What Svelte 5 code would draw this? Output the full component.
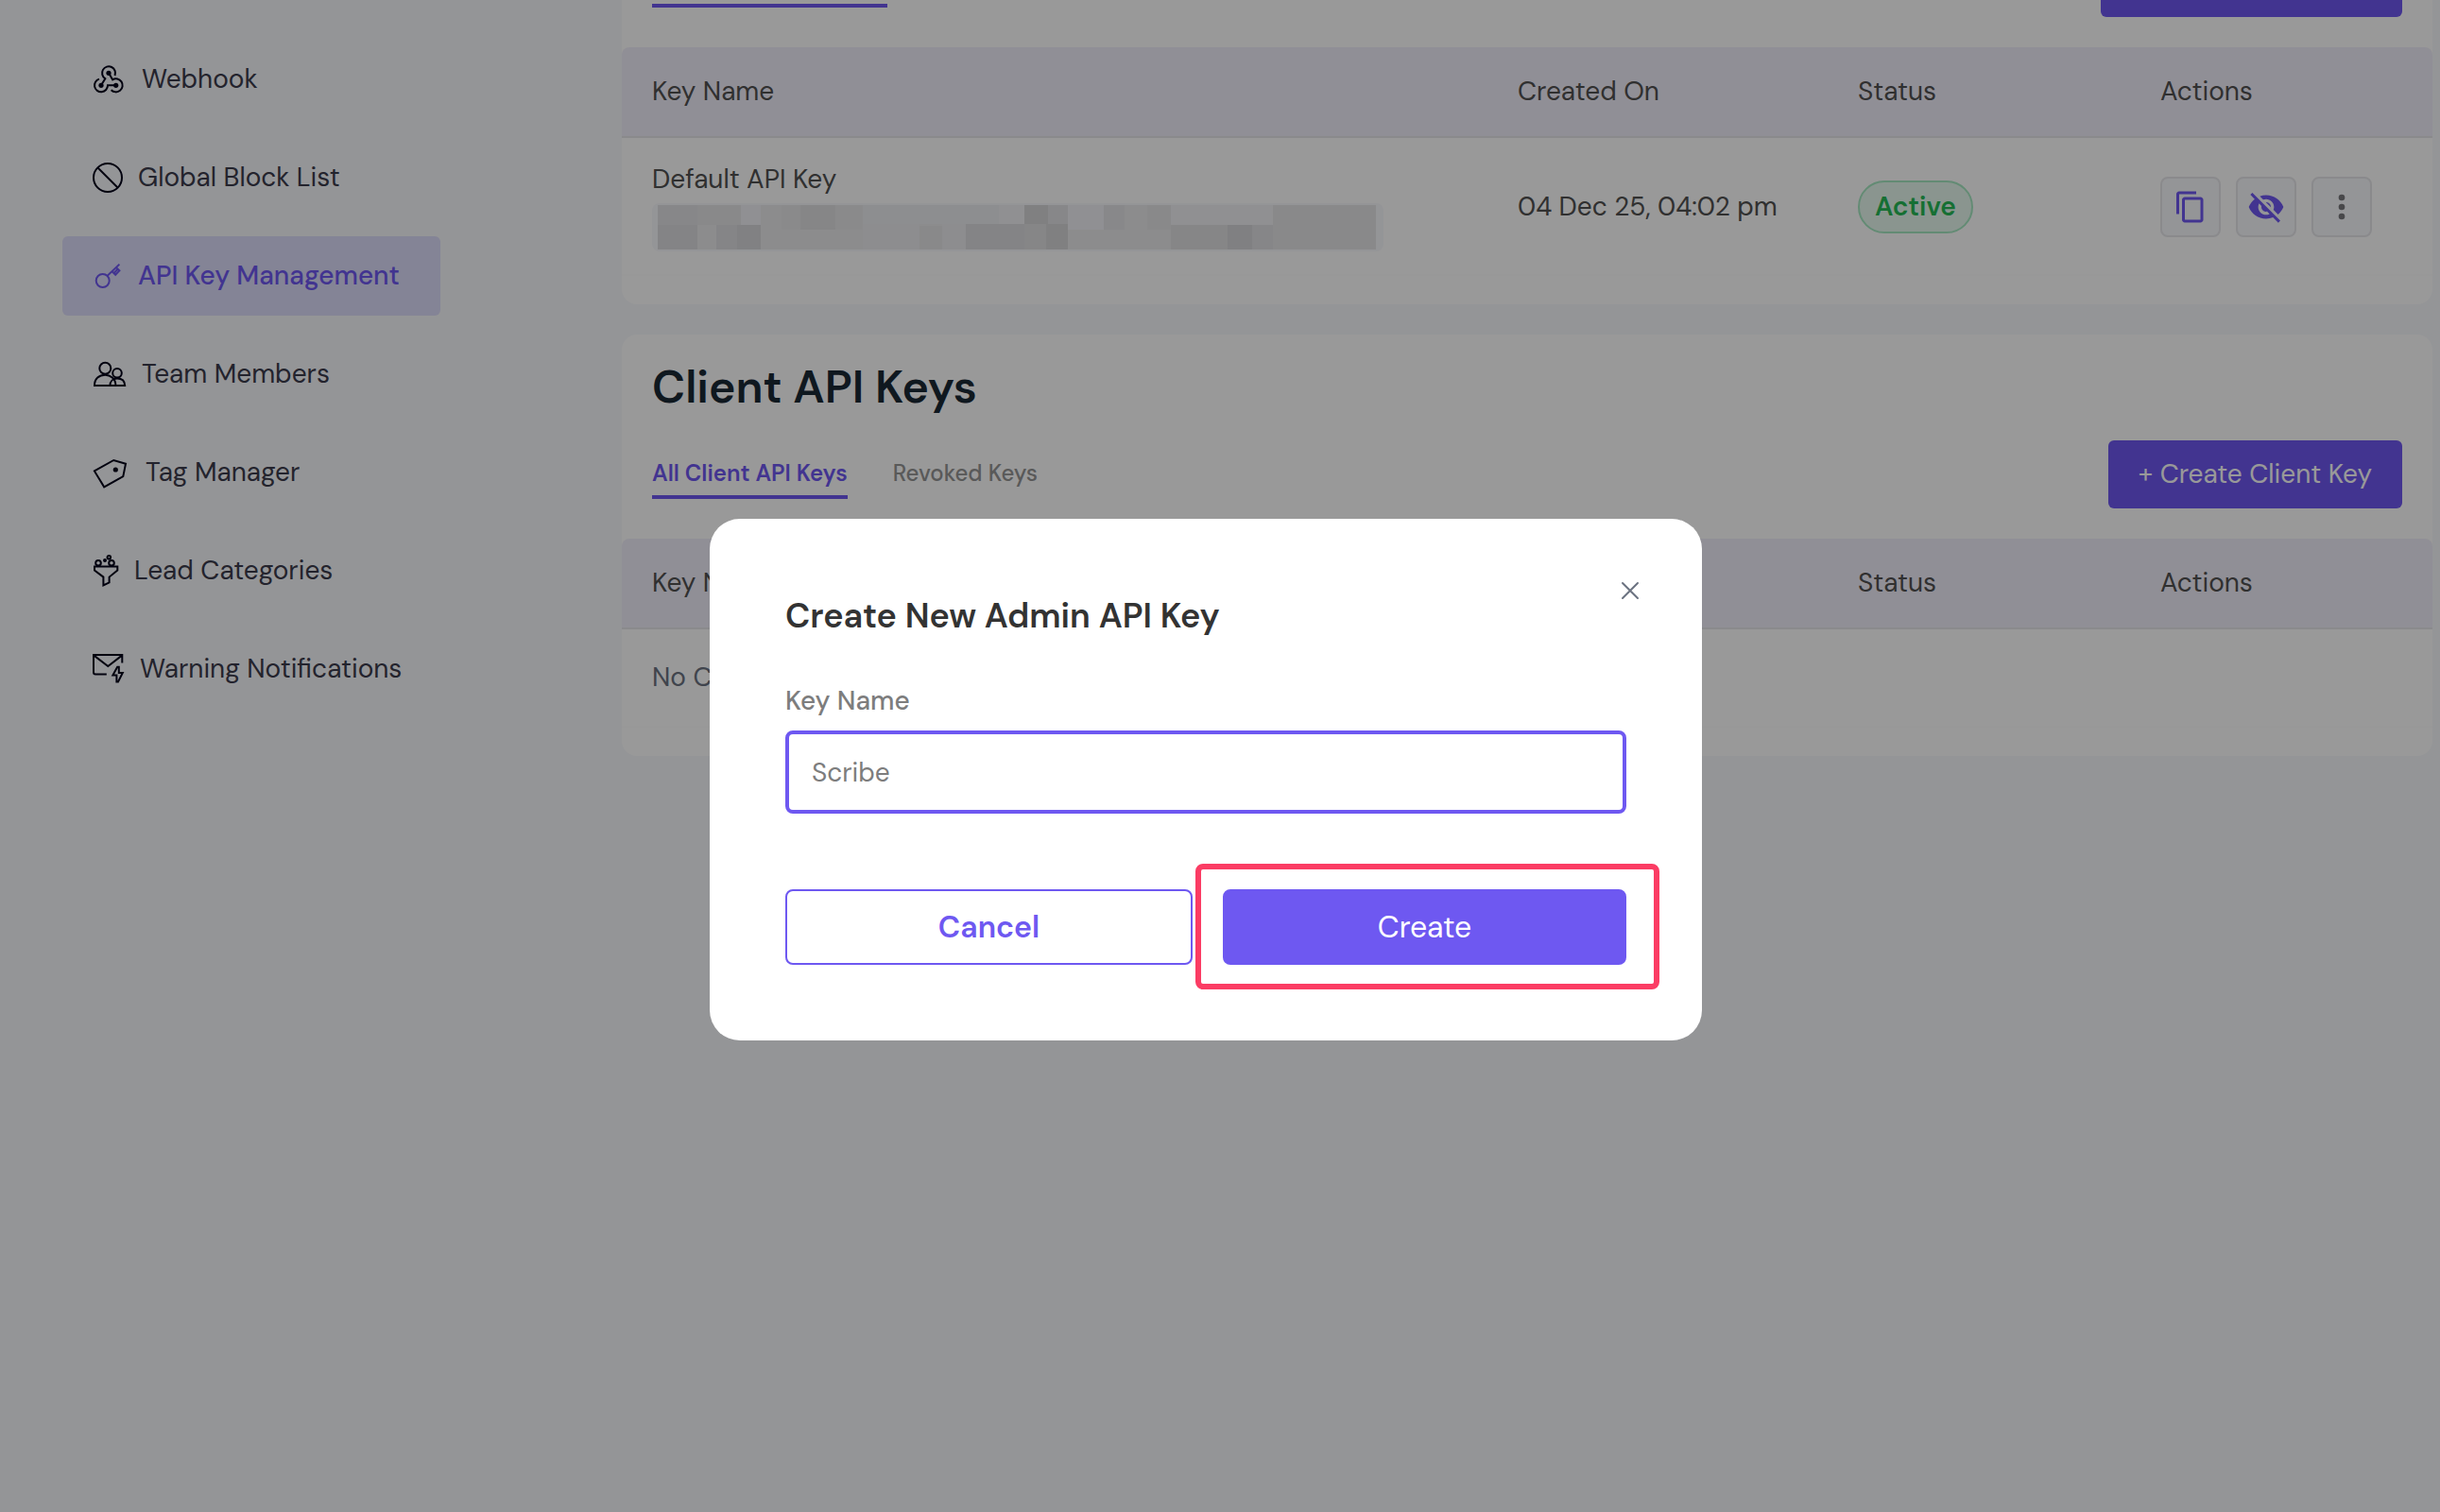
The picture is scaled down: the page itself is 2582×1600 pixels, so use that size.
<script lang="ts">
  type Block = [x: number, y: number, w: number, h: number, fill: string];

  const navItems = [
    { id: 'webhook', label: 'Webhook', iconWidth: 38 },
    { id: 'block', label: 'Global Block List', iconWidth: 34 },
    { id: 'key', label: 'API Key Management', iconWidth: 34, active: true },
    { id: 'team', label: 'Team Members', iconWidth: 38 },
    { id: 'tag', label: 'Tag Manager', iconWidth: 42 },
    { id: 'lead', label: 'Lead Categories', iconWidth: 30 },
    { id: 'warning', label: 'Warning Notifications', iconWidth: 36 }
  ];

  const columns = ['Key Name', 'Created On', 'Status', 'Actions'];

  // mosaic that hides the key value
  const mosaic: Block[] = [
    [0, 0, 42, 21, '#e2e2e4'],
    [0, 21, 42, 26, '#dddde0'],
    [42, 0, 46, 21, '#e4e4e6'],
    [62, 21, 22, 26, '#dedee1'],
    [84, 21, 25, 26, '#d8d8da'],
    [88, 0, 21, 21, '#f1f1f6'],
    [131, 0, 20, 26, '#e6e6e8'],
    [151, 0, 37, 26, '#e0e0e2'],
    [188, 0, 29, 26, '#e6e6e8'],
    [217, 0, 144, 20, '#ecedf0'],
    [217, 20, 60, 27, '#ebebee'],
    [277, 22, 24, 25, '#e4e4e6'],
    [301, 20, 25, 27, '#ebebee'],
    [326, 20, 62, 27, '#dcdcdf'],
    [361, 0, 27, 20, '#f0f0f4'],
    [388, 0, 25, 20, '#d5d5d8'],
    [413, 0, 21, 20, '#e2e2e5'],
    [388, 20, 23, 27, '#dfdfe1'],
    [411, 20, 23, 27, '#d6d6d8'],
    [434, 0, 38, 26, '#f1f1f5'],
    [472, 0, 22, 26, '#e3e3e6'],
    [518, 0, 25, 26, '#e5e5e7'],
    [543, 0, 108, 21, '#f0f0f4'],
    [543, 21, 60, 26, '#dfdfe1'],
    [603, 21, 26, 26, '#d6d6d9'],
    [629, 21, 22, 26, '#e0e0e3'],
    [651, 0, 109, 47, '#e4e4e6']
  ];

  let keyName = $state('');
</script>

<div class="page">
  <nav class="sidebar">
    {#each navItems as item}
      <a href="#{item.id}" class="nav-item" class:active={item.active}>
        <svg width={item.iconWidth} height="32" fill="none" stroke="currentColor" stroke-width="2" aria-hidden="true">
          {#if item.id === 'webhook'}
            <path d="M9 22.3 L13.3 15.2 A7 7 0 1 1 23.5 12" />
            <path d="M17 9.3 L21.2 16.3 A7 7 0 1 1 19.6 27.2" />
            <path d="M24.7 22.3 H16 A7 7 0 1 1 7 15.6" />
            <circle cx="17" cy="9.3" r="2.6" fill="currentColor" stroke="none" />
            <circle cx="9" cy="22.3" r="2.6" fill="currentColor" stroke="none" />
            <circle cx="24.7" cy="22.3" r="2.6" fill="currentColor" stroke="none" />
          {:else if item.id === 'block'}
            <circle cx="16" cy="16" r="15" />
            <path d="M5.5 5.5 L26.5 26.5" />
          {:else if item.id === 'key'}
            <circle cx="10.7" cy="21" r="7" />
            <path d="M15.4 16 L28.4 3.6 M20.4 11 L24.2 14.8 L28.4 10.4 L24.8 7 M22.6 13 L26.4 9" />
          {:else if item.id === 'team'}
            <circle cx="13.3" cy="9.8" r="6" />
            <circle cx="26" cy="14.8" r="4.8" />
            <path d="M2 28 C2 20.5 7 16.8 13.3 16.8 C18.5 16.8 24.4 20.5 24.4 28 Z" />
            <path d="M18.4 28 C18.4 23.5 21.5 20.6 26 20.6 C31 20.6 34 23.5 34.2 28 Z" />
          {:else if item.id === 'tag'}
            <path d="M1.9 14.4 L22.3 3 L35 6.8 L32.3 20.2 L12.2 31.3 Z" />
            <circle cx="24.3" cy="13" r="2.6" fill="currentColor" stroke="none" />
          {:else if item.id === 'lead'}
            <path d="M2 11.5 H26.3 V15.5 L17.6 22.6 V28.4 L11.4 31.4 V22.6 L2 15.5 Z" />
            <circle cx="6" cy="7.8" r="2.8" />
            <circle cx="20" cy="7.8" r="2.8" />
            <circle cx="17.3" cy="1.7" r="1.8" />
            <circle cx="13" cy="5" r="2" fill="currentColor" stroke="none" />
          {:else}
            <path d="M14.8 21.6 H3 Q1 21.6 1 19.6 V1 H31.3 V9.6 M1.4 1.6 L16.3 13 L31 1.6" />
            <path d="M26.2 13.8 L21.4 22.4 H25.4 V29.4 H27 L31.8 20 H27.8 V13.8 Z" />
          {/if}
        </svg>
        <span>{item.label}</span>
      </a>
    {/each}
  </nav>

  <main>
    <section class="card first">
      <div class="card-edge">
        <div class="tab-line"></div>
        <div class="button-edge"></div>
      </div>
      <table>
        <thead>
          <tr>
            {#each columns as col}<th>{col}</th>{/each}
          </tr>
        </thead>
        <tbody>
          <tr>
            <td>
              <div class="key-name">Default API Key</div>
              <div class="key-value">
                <svg viewBox="0 0 760 47" shape-rendering="crispEdges" aria-hidden="true">
                  <rect width="760" height="47" fill="#e9e9ec" />
                  {#each mosaic as [x, y, w, h, fill]}
                    <rect {x} {y} width={w} height={h} {fill} />
                  {/each}
                </svg>
              </div>
            </td>
            <td>04 Dec 25, 04:02 pm</td>
            <td><span class="badge">Active</span></td>
            <td>
              <div class="actions">
                <button class="icon-btn" aria-label="Copy key">
                  <svg width="36" height="36" viewBox="0 0 24 24" fill="currentColor">
                    <path d="M16 1H4c-1.1 0-2 .9-2 2v14h2V3h12V1zm3 4H8c-1.1 0-2 .9-2 2v14c0 1.1.9 2 2 2h11c1.1 0 2-.9 2-2V7c0-1.1-.9-2-2-2zm0 16H8V7h11v14z" />
                  </svg>
                </button>
                <button class="icon-btn" aria-label="Show key">
                  <svg width="40" height="40" viewBox="0 0 24 24" fill="currentColor">
                    <path d="M12 7c2.76 0 5 2.24 5 5 0 .65-.13 1.26-.36 1.83l2.92 2.92c1.51-1.26 2.7-2.89 3.43-4.75-1.73-4.39-6-7.5-11-7.5-1.4 0-2.74.25-3.98.7l2.16 2.16C10.74 7.13 11.35 7 12 7zM2 4.27l2.28 2.28.46.46C3.08 8.3 1.78 10.02 1 12c1.73 4.39 6 7.5 11 7.5 1.55 0 3.03-.3 4.38-.84l.42.42L19.73 22 21 20.73 3.27 3 2 4.27zM7.53 9.8l1.55 1.55c-.05.21-.08.43-.08.65 0 1.66 1.34 3 3 3 .22 0 .44-.03.65-.08l1.55 1.55c-.67.33-1.41.53-2.2.53-2.76 0-5-2.24-5-5 0-.79.2-1.53.53-2.2zm4.31-.78l3.15 3.15.02-.16c0-1.66-1.34-3-3-3l-.17.01z" />
                  </svg>
                </button>
                <button class="icon-btn more" aria-label="More actions">
                  <svg width="40" height="40" viewBox="0 0 24 24" fill="currentColor">
                    <circle cx="12" cy="6" r="2" />
                    <circle cx="12" cy="12" r="2" />
                    <circle cx="12" cy="18" r="2" />
                  </svg>
                </button>
              </div>
            </td>
          </tr>
        </tbody>
      </table>
    </section>

    <section class="card">
      <div class="card-head">
        <h2>Client API Keys</h2>
        <div class="toolbar">
          <div class="tabs">
            <button class="tab selected">All Client API Keys</button>
            <button class="tab">Revoked Keys</button>
          </div>
          <button class="add-btn">+ Create Client Key</button>
        </div>
      </div>
      <table>
        <thead>
          <tr>
            {#each columns as col}<th>{col}</th>{/each}
          </tr>
        </thead>
        <tbody>
          <tr class="empty">
            <td colspan="4">No Clients</td>
          </tr>
        </tbody>
      </table>
    </section>
  </main>
</div>

<div class="backdrop">
  <div class="modal" role="dialog" aria-modal="true" aria-labelledby="modal-title">
    <button class="close" aria-label="Close">
      <svg width="20" height="20" fill="none" stroke="currentColor" stroke-width="2" stroke-linecap="round">
        <path d="M2 2 L18 18 M18 2 L2 18" />
      </svg>
    </button>
    <h3 id="modal-title">Create New Admin API Key</h3>
    <label for="key-name">Key Name</label>
    <input id="key-name" type="text" placeholder="Scribe" bind:value={keyName} />
    <div class="modal-actions">
      <button class="cancel">Cancel</button>
      <div class="highlighted">
        <button class="create">Create</button>
      </div>
    </div>
  </div>
</div>

<style>
  :global(body) {
    margin: 0;
    overflow: hidden;
    background: #f7f8fc;
  }

  .page, .backdrop {
    font-family: 'DM Sans', Inter, sans-serif;
    font-size: 28px;
    line-height: 34px;
  }
  .page *, .backdrop, .backdrop * { box-sizing: border-box; }
  button, input { font: inherit; cursor: pointer; }
  svg { display: block; flex-shrink: 0; overflow: visible; }

  .page {
    display: flex;
    min-height: 100vh;
    color: #505050;
  }

  /* sidebar */
  .sidebar {
    display: flex;
    flex-direction: column;
    flex-shrink: 0;
    gap: 20px;
    width: 658px;
    padding: 42px 192px 0 66px;
  }
  .nav-item {
    display: flex;
    align-items: center;
    gap: 14px;
    height: 84px;
    padding: 0 32px;
    border-radius: 6px;
    color: #3b3b4b;
    text-decoration: none;
    white-space: nowrap;
  }
  .nav-item svg { color: #04041a; }
  .nav-item.active {
    background: #dcdcfa;
    color: #6e58f1;
    font-weight: 500;
  }
  .nav-item.active svg { color: inherit; }

  /* cards */
  main {
    flex: 1;
    min-width: 0;
    padding-right: 8px;
  }
  .card {
    margin-bottom: 32px;
    padding-bottom: 30px;
    background: #fff;
    border-radius: 16px;
  }
  .card.first { border-radius: 0 0 16px 16px; }
  .card-edge {
    display: flex;
    justify-content: space-between;
    padding: 0 32px 32px;
  }
  .tab-line {
    width: 249px;
    height: 4px;
    margin-top: 4px;
    background: #6e58f1;
  }
  .button-edge {
    width: 319px;
    height: 18px;
    background: #6e58f1;
    border-radius: 0 0 6px 6px;
  }
  .card-head { padding: 25px 32px 32px; }
  h2 {
    margin: 0 0 25px;
    color: #192835;
    font-size: 48px;
    font-weight: 600;
    line-height: 62px;
  }
  .toolbar {
    display: flex;
    align-items: center;
    justify-content: space-between;
    height: 72px;
  }
  .tabs { display: flex; gap: 48px; }
  .tab {
    padding: 10px 0 8px;
    border: 0;
    border-bottom: 4px solid transparent;
    background: none;
    color: #949494;
    font-size: 24px;
    font-weight: 500;
    line-height: 30px;
  }
  .tab.selected {
    border-color: #6e58f1;
    color: #6e58f1;
    font-weight: 600;
  }
  .add-btn {
    height: 72px;
    padding: 0 32px;
    border: 0;
    border-radius: 6px;
    background: #6e58f1;
    color: #fff;
  }

  /* tables */
  table {
    width: 100%;
    table-layout: fixed;
    border-spacing: 0;
  }
  th {
    height: 96px;
    padding: 0 32px;
    border-bottom: 2px solid #e6e6ea;
    background: #f1effa;
    font-weight: 400;
    text-align: left;
  }
  th:first-child { border-top-left-radius: 8px; }
  th:last-child { width: 320px; border-top-right-radius: 8px; }
  th:nth-child(2) { width: 360px; }
  th:nth-child(3) { width: 320px; }
  td {
    height: 146px;
    padding: 2px 32px 0;
    border-bottom: 2px solid #fdfdfd;
    white-space: nowrap;
  }
  .empty td {
    height: 104px;
    padding-top: 0;
    color: #6b7280;
  }
  .key-name { margin-bottom: 8px; }
  .key-value {
    width: 774px;
    padding: 2px 8px 2px 6px;
    border-radius: 8px;
    background: #f7f8fc;
  }
  .badge {
    display: inline-block;
    padding: 9px 16px;
    border: 2px solid #a5e8c2;
    border-radius: 28px;
    background: #e6f9ee;
    color: #25b955;
    font-weight: 600;
  }
  .actions { display: flex; gap: 16px; }
  .icon-btn {
    display: flex;
    align-items: center;
    justify-content: center;
    width: 64px;
    height: 64px;
    padding: 0;
    border: 2px solid #e6e6ea;
    border-radius: 8px;
    background: #f7f8fc;
    color: #6e58f1;
  }
  .icon-btn.more { color: #78787c; }

  /* modal */
  .backdrop {
    position: fixed;
    inset: 0;
    display: flex;
    align-items: center;
    justify-content: center;
    padding: 50px 30px 0 0;
    background: rgba(0, 0, 0, 0.4);
  }
  .modal {
    position: relative;
    width: 1050px;
    max-width: 100%;
    padding: 80px;
    border-radius: 32px;
    background: #fff;
  }
  .close {
    position: absolute;
    top: 56px;
    right: 56px;
    display: flex;
    align-items: center;
    justify-content: center;
    width: 40px;
    height: 40px;
    padding: 0;
    border: 0;
    background: none;
    color: #6b7280;
  }
  h3 {
    margin: 0 0 50px;
    color: #333;
    font-size: 36px;
    font-weight: 600;
    line-height: 46px;
  }
  label {
    display: block;
    margin-bottom: 14px;
    color: #7d7d7d;
    font-weight: 500;
  }
  input {
    display: block;
    width: 100%;
    height: 88px;
    padding: 0 24px;
    border: 4px solid #6e58f1;
    border-radius: 8px;
    outline: 0;
    background: #fff;
  }
  input::placeholder { color: #7d7d7d; opacity: 1; }
  .modal-actions {
    display: flex;
    gap: 32px;
    margin-top: 80px;
  }
  .cancel, .highlighted { flex: 1; }
  .cancel, .create {
    height: 80px;
    padding: 0;
    border: 2px solid #6e58f1;
    border-radius: 8px;
    font-size: 32px;
  }
  .cancel {
    background: #fff;
    color: #6e58f1;
    font-weight: 600;
  }
  .create {
    width: 100%;
    background: #6e58f1;
    color: #fff;
  }
  .highlighted { position: relative; }
  .highlighted::after {
    content: '';
    position: absolute;
    inset: -27px -35px -26px -29px;
    border: 6px solid #fb3c64;
    border-radius: 8px;
    pointer-events: none;
  }
</style>
